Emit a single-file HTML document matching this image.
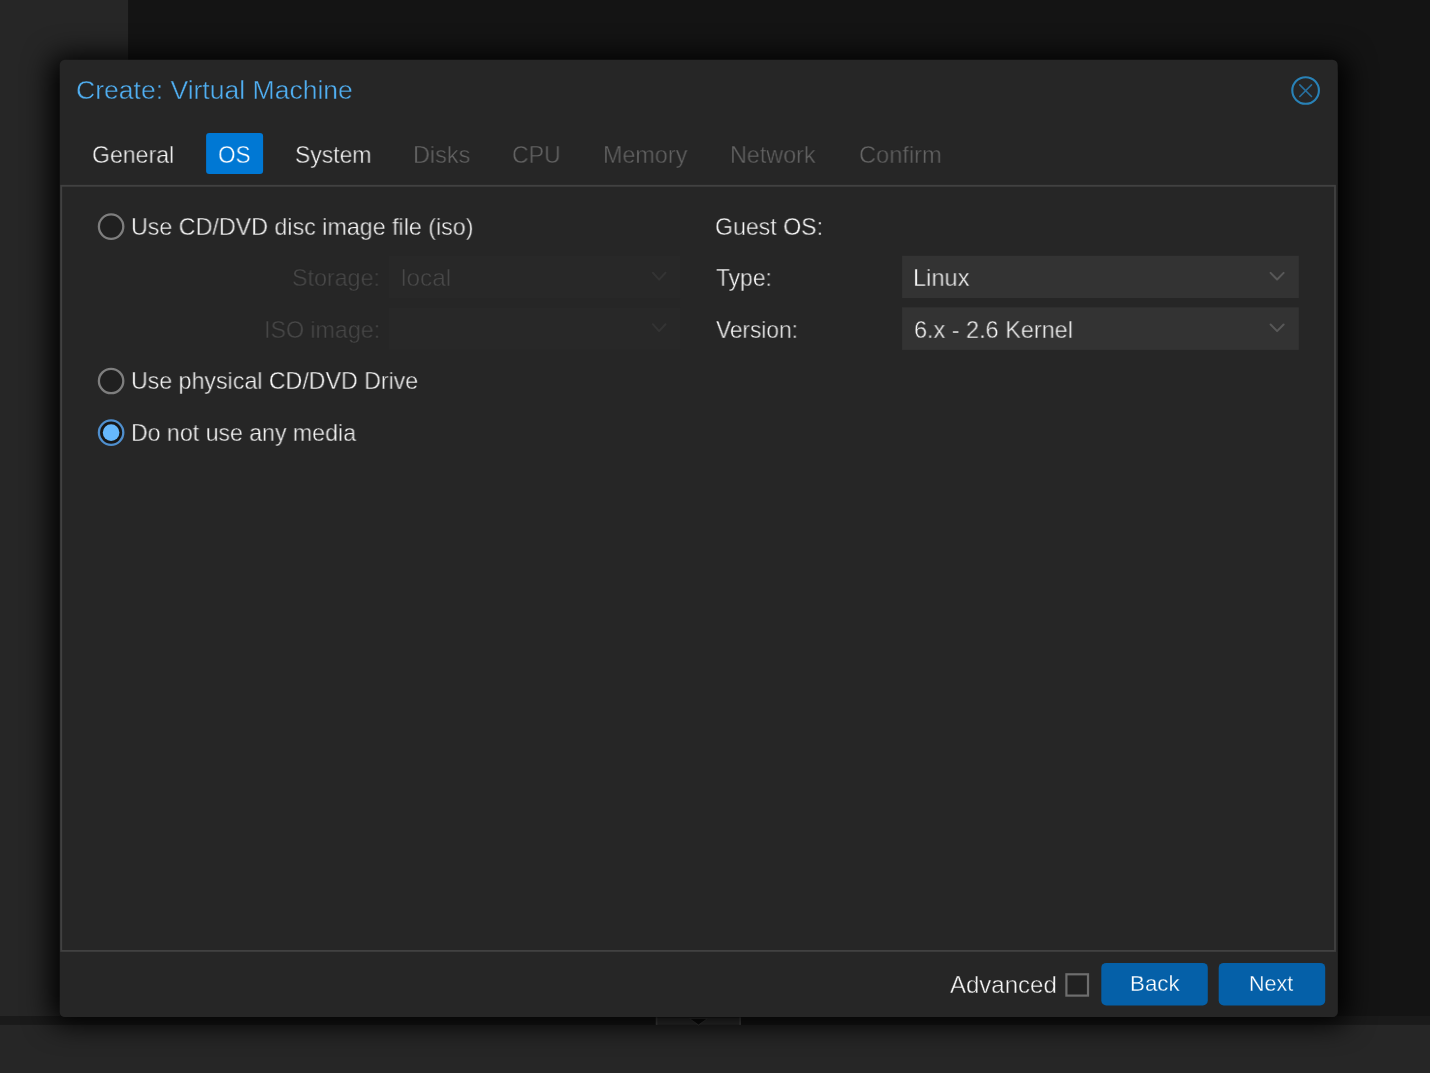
<!DOCTYPE html>
<html lang="en"><head><meta charset="utf-8"><title>Create: Virtual Machine</title>
<style>
html,body{margin:0;padding:0;}
body{width:1430px;height:1073px;position:relative;overflow:hidden;background:#141414;font-family:"Liberation Sans",sans-serif;}
.abs{position:absolute;}
.tx{position:absolute;will-change:transform;white-space:nowrap;transform-origin:0 0;font-family:"Liberation Sans",sans-serif;}
#bg,#ui{left:0;top:0;}
#shadow{left:60px;top:67px;width:1278px;height:950px;border-radius:5px;box-shadow:0 -2px 28px 9px #000;}

</style></head>
<body>
<svg class="abs" id="bg" width="1430" height="1073" viewBox="0 0 1430 1073">
<rect x="0" y="0" width="128.1" height="1016" fill="#262626"/>
<rect x="0" y="1016" width="1430" height="9" fill="#1a1a1a"/>
<rect x="0" y="1024.8" width="1430" height="48.2" fill="#262626"/>
<!-- splitter collapse handle -->
<rect x="655.8" y="1017.4" width="85.1" height="7.4" fill="#383838"/>
<rect x="655.8" y="1017.4" width="1.6" height="7.4" fill="#565656"/>
<rect x="739.3" y="1017.4" width="1.6" height="7.4" fill="#565656"/>
<path d="M689.5 1018.6 L707.5 1018.6 L698.5 1025 Z" fill="#111111" stroke="#4a4a4a" stroke-width="0.8"/>
</svg>
<div class="abs" id="shadow"></div>
<svg class="abs" id="ui" width="1430" height="1073" viewBox="0 0 1430 1073">
<!-- dialog body -->
<rect x="59.7" y="59.7" width="1278" height="957.4" rx="5.2" fill="#262626"/>
<!-- inner panel border -->
<rect x="61.2" y="185.8" width="1273.8" height="765.1" fill="none" stroke="#414141" stroke-width="1.85"/>
<!-- active tab -->
<rect x="206.1" y="132.9" width="57" height="41.1" rx="3.2" fill="#0078d4"/>
<!-- close tool -->
<g fill="none" stroke-linecap="round">
<circle cx="1305.6" cy="90.5" r="13.3" stroke="#2982b7" stroke-width="2.1"/>
<path d="M1299.8 84.9 L1311.5 96.5 M1311.5 84.9 L1299.8 96.5" stroke="#276f9e" stroke-width="1.6"/>
</g>
<!-- radios -->
<circle cx="111.1" cy="226.6" r="12.2" fill="#202020" stroke="#7e7e7e" stroke-width="2.3"/>
<circle cx="111.1" cy="381" r="12.2" fill="#202020" stroke="#7e7e7e" stroke-width="2.3"/>
<circle cx="111.1" cy="432.6" r="12.2" fill="#171717" stroke="#4f8fce" stroke-width="2.3"/>
<circle cx="111.1" cy="432.6" r="8.3" fill="#66b8fc"/>
<!-- disabled fields -->
<rect x="389" y="256" width="291.2" height="42.2" fill="#282828"/>
<rect x="389" y="307.7" width="291.2" height="42" fill="#282828"/>
<path d="M652.8 272.7 L659.1 279.6 L665.5 272.7 M652.8 324.2 L659.1 331.1 L665.5 324.2" fill="none" stroke="#343434" stroke-width="2" stroke-linecap="round" stroke-linejoin="round"/>
<!-- fields -->
<rect x="902.1" y="255.8" width="396.7" height="42.2" fill="#333333"/>
<rect x="902.1" y="307.3" width="396.7" height="42.6" fill="#333333"/>
<path d="M1270.6 272.9 L1277.1 279.5 L1283.6 272.9 M1270.6 324.5 L1277.1 331.1 L1283.6 324.5" fill="none" stroke="#585858" stroke-width="2" stroke-linecap="round" stroke-linejoin="round"/>
<!-- checkbox -->
<rect x="1066.4" y="974.3" width="21.6" height="21.3" fill="#212121" stroke="#6e6e6e" stroke-width="2.2"/>
<!-- buttons -->
<rect x="1101.3" y="962.9" width="106.5" height="42.6" rx="5" fill="#0560a8"/>
<rect x="1218.7" y="962.9" width="106.5" height="42.6" rx="5" fill="#0560a8"/>
</svg>

<div class="tx" style="left:75.80px;top:77px;font-size:26px;line-height:26px;color:#50aef0;-webkit-text-stroke:0.4px #262626;transform:scaleX(1.0208)">Create: Virtual Machine</div>
<div class="tx" style="left:92.20px;top:143px;font-size:24px;line-height:24px;color:#f3f3f3;-webkit-text-stroke:0.4px #262626;transform:scaleX(0.9627)">General</div>
<div class="tx" style="left:218.40px;top:143px;font-size:24px;line-height:24px;color:#ffffff;-webkit-text-stroke:0.4px #0078d4;transform:scaleX(0.9366)">OS</div>
<div class="tx" style="left:294.60px;top:143px;font-size:24px;line-height:24px;color:#f3f3f3;-webkit-text-stroke:0.4px #262626;transform:scaleX(0.9552)">System</div>
<div class="tx" style="left:413.00px;top:143px;font-size:24px;line-height:24px;color:#646464;-webkit-text-stroke:0.4px #262626;transform:scaleX(0.9750)">Disks</div>
<div class="tx" style="left:512.40px;top:143px;font-size:24px;line-height:24px;color:#646464;-webkit-text-stroke:0.4px #262626;transform:scaleX(0.9626)">CPU</div>
<div class="tx" style="left:603.00px;top:143px;font-size:24px;line-height:24px;color:#646464;-webkit-text-stroke:0.4px #262626;transform:scaleX(0.9718)">Memory</div>
<div class="tx" style="left:730.40px;top:143px;font-size:24px;line-height:24px;color:#646464;-webkit-text-stroke:0.4px #262626;transform:scaleX(0.9721)">Network</div>
<div class="tx" style="left:859.00px;top:143px;font-size:24px;line-height:24px;color:#646464;-webkit-text-stroke:0.4px #262626;transform:scaleX(0.9843)">Confirm</div>
<div class="tx" style="left:131.20px;top:215px;font-size:24px;line-height:24px;color:#f3f3f3;-webkit-text-stroke:0.4px #262626;transform:scaleX(0.9690)">Use CD/DVD disc image file (iso)</div>
<div class="tx" style="left:131.20px;top:369px;font-size:24px;line-height:24px;color:#f3f3f3;-webkit-text-stroke:0.4px #262626;transform:scaleX(0.9656)">Use physical CD/DVD Drive</div>
<div class="tx" style="left:131.20px;top:421px;font-size:24px;line-height:24px;color:#f3f3f3;-webkit-text-stroke:0.4px #262626;transform:scaleX(0.9634)">Do not use any media</div>
<div class="tx" style="left:292.00px;top:266px;font-size:24px;line-height:24px;color:#484848;-webkit-text-stroke:0.4px #262626;transform:scaleX(0.9693)">Storage:</div>
<div class="tx" style="left:263.80px;top:318px;font-size:24px;line-height:24px;color:#484848;-webkit-text-stroke:0.4px #262626;transform:scaleX(0.9673)">ISO image:</div>
<div class="tx" style="left:401.00px;top:266px;font-size:24px;line-height:24px;color:#484848;-webkit-text-stroke:0.4px #282828;transform:scaleX(1.0171)">local</div>
<div class="tx" style="left:715.40px;top:215px;font-size:24px;line-height:24px;color:#f3f3f3;-webkit-text-stroke:0.4px #262626;transform:scaleX(0.9643)">Guest OS:</div>
<div class="tx" style="left:715.80px;top:266px;font-size:24px;line-height:24px;color:#f3f3f3;-webkit-text-stroke:0.4px #262626;transform:scaleX(0.9510)">Type:</div>
<div class="tx" style="left:715.80px;top:318px;font-size:24px;line-height:24px;color:#f3f3f3;-webkit-text-stroke:0.4px #262626;transform:scaleX(0.9447)">Version:</div>
<div class="tx" style="left:912.80px;top:266px;font-size:24px;line-height:24px;color:#f3f3f3;-webkit-text-stroke:0.4px #333333;transform:scaleX(0.9837)">Linux</div>
<div class="tx" style="left:913.80px;top:318px;font-size:24px;line-height:24px;color:#f3f3f3;-webkit-text-stroke:0.4px #333333;transform:scaleX(0.9763)">6.x - 2.6 Kernel</div>
<div class="tx" style="left:950.40px;top:973px;font-size:24px;line-height:24px;color:#f3f3f3;-webkit-text-stroke:0.4px #262626;transform:scaleX(1.0000)">Advanced</div>
<div class="tx" style="left:1129.60px;top:974px;font-size:21.5px;line-height:21.5px;color:#ffffff;-webkit-text-stroke:0.3px #0560a8;transform:scaleX(1.0373)">Back</div>
<div class="tx" style="left:1248.80px;top:974px;font-size:21.5px;line-height:21.5px;color:#ffffff;-webkit-text-stroke:0.3px #0560a8;transform:scaleX(0.9978)">Next</div>
</body></html>
